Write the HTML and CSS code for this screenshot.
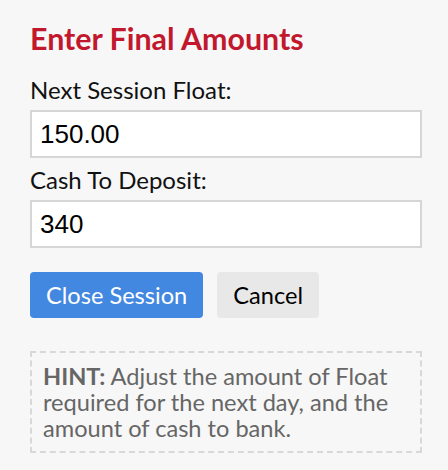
FILE: index.html
```html
<!DOCTYPE html>
<html lang="en">
<head>
    <meta charset="UTF-8">
    <title>Close Session</title>
    <link rel="stylesheet" href="styles.css">
</head>
<body>
    <div class="panel">
        <h2 class="title">Enter Final Amounts</h2>
        <form class="amounts">
            <label for="float">Next Session Float:</label>
            <input type="text" id="float" class="field" value="150.00">
            <label for="deposit">Cash To Deposit:</label>
            <input type="text" id="deposit" class="field" value="340">
            <div class="actions">
                <button type="button" class="button primary">Close Session</button>
                <button type="button" class="button">Cancel</button>
            </div>
        </form>
        <p class="hint"><strong>HINT:</strong> Adjust the amount of Float required for the next day, and the amount of cash to bank.</p>
    </div>
</body>
</html>
```

FILE: styles.css
```css
body {
    font-family: Lato, "Open Sans", sans-serif;
    background-color: #f7f7f7;
    margin: 0;
    padding: 0;
}
.panel {
    width: 392px;
    padding: 20px 26px 0 30px;
}
.title {
    color: #c2182e;
    font-size: 30.4px;
    font-weight: bold;
    line-height: 36px;
    margin: 0 0 20px 0;
}
.amounts label {
    display: block;
    font-size: 24px;
    line-height: 28px;
    margin-bottom: 6px;
    color: #111;
}
.field {
    display: block;
    width: 100%;
    height: 48px;
    box-sizing: border-box;
    border: 2px solid #d6d6d6;
    background: #ffffff;
    padding: 0 8px;
    margin: 0 0 8px 0;
    font-family: "Liberation Sans", Arial, sans-serif;
    font-size: 26px;
    color: #000;
}
.actions {
    display: flex;
    gap: 14px;
    margin-top: 24px;
}
.button {
    font-family: Lato, sans-serif;
    font-size: 23.6px;
    height: 46px;
    padding: 0 16px;
    border: none;
    border-radius: 4px;
    background: #e8e8e8;
    color: #000;
}
.button.primary {
    background: #4287e0;
    color: #ffffff;
}
.hint {
    margin: 33px 0 0 0;
    border: 2px dashed #d8d8d8;
    padding: 10px 11px;
    font-size: 23.6px;
    line-height: 26px;
    color: #666666;
}
```
